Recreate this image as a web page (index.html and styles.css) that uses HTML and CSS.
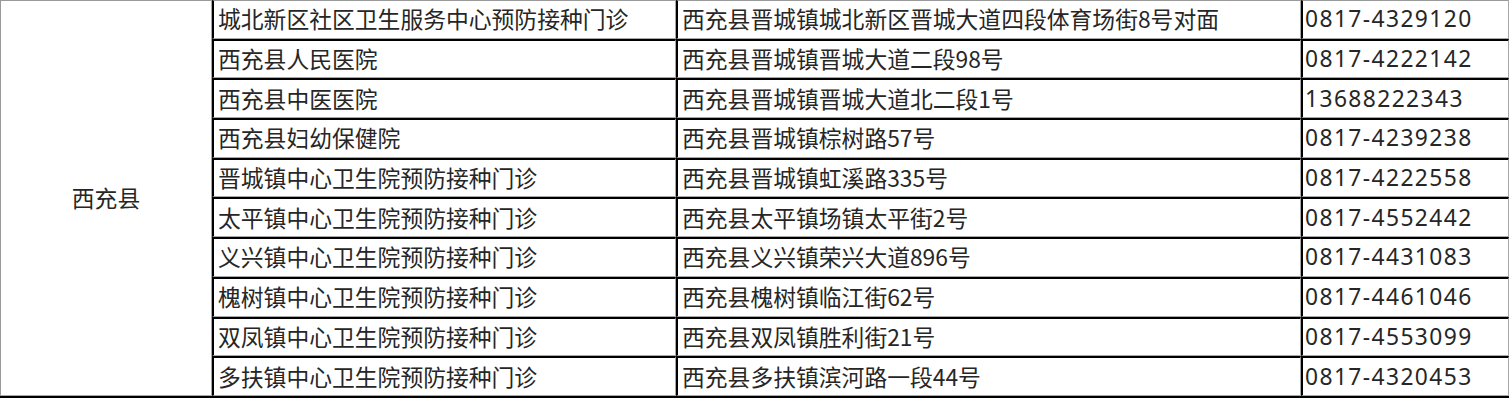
FILE: index.html
```html
<!DOCTYPE html>
<html lang="zh-CN">
<head>
<meta charset="utf-8">
<title>西充县预防接种门诊</title>
<link rel="stylesheet" href="styles.css">
</head>
<body>
<table class="clinics">
  <colgroup>
    <col class="c-county">
    <col class="c-name">
    <col class="c-addr">
    <col class="c-tel">
  </colgroup>
  <tbody>
    <tr>
      <td class="county first-row" rowspan="10">西充县</td>
      <td class="first-row">城北新区社区卫生服务中心预防接种门诊</td>
      <td class="first-row">西充县晋城镇城北新区晋城大道四段体育场街8号对面</td>
      <td class="first-row tel">0817-4329120</td>
    </tr>
    <tr><td>西充县人民医院</td><td>西充县晋城镇晋城大道二段98号</td><td class="tel">0817-4222142</td></tr>
    <tr><td>西充县中医医院</td><td>西充县晋城镇晋城大道北二段1号</td><td class="tel">13688222343</td></tr>
    <tr><td>西充县妇幼保健院</td><td>西充县晋城镇棕树路57号</td><td class="tel">0817-4239238</td></tr>
    <tr><td>晋城镇中心卫生院预防接种门诊</td><td>西充县晋城镇虹溪路335号</td><td class="tel">0817-4222558</td></tr>
    <tr><td>太平镇中心卫生院预防接种门诊</td><td>西充县太平镇场镇太平街2号</td><td class="tel">0817-4552442</td></tr>
    <tr><td>义兴镇中心卫生院预防接种门诊</td><td>西充县义兴镇荣兴大道896号</td><td class="tel">0817-4431083</td></tr>
    <tr><td>槐树镇中心卫生院预防接种门诊</td><td>西充县槐树镇临江街62号</td><td class="tel">0817-4461046</td></tr>
    <tr><td>双凤镇中心卫生院预防接种门诊</td><td>西充县双凤镇胜利街21号</td><td class="tel">0817-4553099</td></tr>
    <tr><td>多扶镇中心卫生院预防接种门诊</td><td>西充县多扶镇滨河路一段44号</td><td class="tel">0817-4320453</td></tr>
  </tbody>
</table>
</body>
</html>
```

FILE: styles.css
```css
html, body {
  margin: 0;
  padding: 0;
  background: #fff;
}

.clinics {
  width: 1509px;
  table-layout: fixed;
  border-collapse: separate;
  border-spacing: 0;
  border-right: 2px solid #000;
  border-bottom: 2px solid #000;
  font-family: "Noto Sans CJK SC", "Noto Sans", sans-serif;
  font-size: 22.8px;
  color: #262626;
}

.c-county { width: 212px; }
.c-name { width: 464px; }
.c-addr { width: 625px; }
.c-tel { width: 208px; }

.clinics td {
  height: 36.7px;
  padding: 0 0 0 4px;
  border-top: 2px solid #000;
  border-left: 2px solid #000;
  border-right: 1px solid #a8a8a8;
  border-bottom: 1px solid #a8a8a8;
  line-height: 36px;
  white-space: nowrap;
  overflow: hidden;
  text-align: left;
  vertical-align: middle;
}

.clinics td.first-row {
  border-top: 1px solid #9a9a9a;
}

.clinics td.county {
  border-left: 1px solid #9a9a9a;
  text-align: center;
  padding: 0;
}

.clinics td.tel {
  padding-left: 2px;
  font-family: "Noto Sans", sans-serif;
  letter-spacing: 1.4px;
}
```
